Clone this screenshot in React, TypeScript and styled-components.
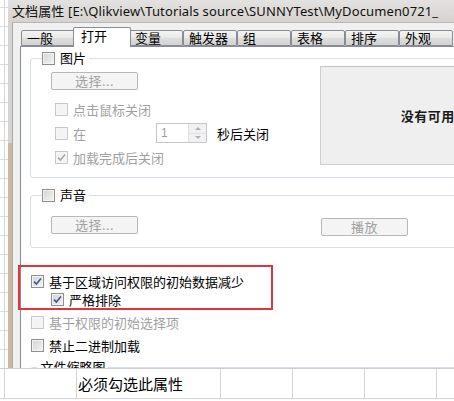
import React from "react";
import styled, { createGlobalStyle } from "styled-components";

const GlobalStyle = createGlobalStyle`
  html, body { margin: 0; padding: 0; background: #fff; }
  body {
    font-family: "Noto Sans", "Noto Sans CJK SC", sans-serif;
    color: #000;
  }
`;

const tabs = ["一般", "打开", "变量", "触发器", "组", "表格", "排序", "外观"];

const Page = styled.div`
  width: 454px;
  height: 401px;
  overflow: hidden;
  display: flex;
  flex-direction: column;
  background-color: #fff;
  background-image: linear-gradient(to right, #d6d6d6 1px, transparent 1px),
    linear-gradient(to bottom, #dcdcdc 1px, transparent 1px);
  background-size: 72px 19px;
  background-position: 4px 7px;
`;

const Desk = styled.div`
  height: 368px;
  flex-shrink: 0;
  display: flex;
  padding-left: 8px;
  overflow: hidden;
`;

const Window = styled.div`
  width: 480px;
  flex-shrink: 0;
  display: flex;
  flex-direction: column;
`;

const TitleBar = styled.div`
  height: 22px;
  flex-shrink: 0;
  padding-left: 4px;
  font-size: 13px;
  line-height: 23px;
  letter-spacing: 0.12px;
  white-space: nowrap;
  color: #111;
  background: linear-gradient(to bottom, #e4e2e0, #d5d2cf);
`;

const Frame = styled.div`
  flex: 1;
  display: flex;
  padding-left: 4px;
  background: linear-gradient(to bottom, #d7d5d3 0 121px, #cdb89c 121px);
`;

const Client = styled.div`
  flex: 1;
  display: flex;
  flex-direction: column;
  padding: 4px 0 0 8px;
  background: #f0f0f0;
  border-left: 1px solid #a8a8a8;
  border-top: 1px solid #b8b8b8;
`;

const TabStrip = styled.div`
  height: 19px;
  display: flex;
  align-items: flex-end;
  position: relative;
  z-index: 1;
`;

const Tab = styled.div<{ $active?: boolean }>`
  box-sizing: border-box;
  width: ${(p) => (p.$active ? 58 : 54)}px;
  height: ${(p) => (p.$active ? 20 : 16)}px;
  margin: 0 ${(p) => (p.$active ? -2 : 0)}px ${(p) => (p.$active ? -1 : 0)}px;
  padding-left: ${(p) => (p.$active ? 7 : 5)}px;
  border: 1px solid #898c95;
  border-bottom: ${(p) => (p.$active ? "none" : "1px solid #898c95")};
  border-radius: 2px 2px 0 0;
  font-size: 13px;
  line-height: ${(p) => (p.$active ? 17 : 14)}px;
  white-space: nowrap;
  position: relative;
  z-index: ${(p) => (p.$active ? 2 : 0)};
  background: ${(p) =>
    p.$active
      ? "#fff"
      : "linear-gradient(to bottom, #f3f3f3, #ebebeb 45%, #dedede 50%, #d3d3d3)"};
`;

const Panel = styled.div`
  flex: 1;
  margin-left: -1px;
  padding: 4px 0 0 9px;
  background: #fff;
  border: 1px solid #898c95;
  display: flex;
  flex-direction: column;
  align-items: flex-start;
`;

const Group = styled.fieldset<{ $top?: number }>`
  align-self: stretch;
  margin: ${(p) => p.$top ?? 0}px 0 0;
  padding: 0;
  border: 1px solid #d5dfe5;
  border-radius: 3px;
  min-width: 0;
`;

const Legend = styled.legend<{ $offset?: number }>`
  margin-left: ${(p) => p.$offset ?? 11}px;
  padding: 0 3px 0 0;
  height: 15px;
  display: flex;
  align-items: center;
  gap: 5px;
  font-size: 13px;
  line-height: 15px;
  color: #000;
`;

const GroupBody = styled.div<{ $bottom: number }>`
  display: flex;
  align-items: flex-start;
  padding: 0 0 ${(p) => p.$bottom}px 20px;
`;

const LeftCol = styled.div`
  width: 269px;
  display: flex;
  flex-direction: column;
  align-items: flex-start;
  padding-top: 6px;
`;

const Button = styled.div<{ $shift?: number; $left?: number }>`
  box-sizing: border-box;
  width: 87px;
  height: 18px;
  margin: ${(p) => p.$shift ?? 0}px 0 0 ${(p) => p.$left ?? 0}px;
  border: 1px solid #b5b9bd;
  border-radius: 2px;
  background: #f4f4f4;
  color: #a2a2a2;
  font-size: 13px;
  line-height: 16px;
  text-align: center;
  letter-spacing: 0.5px;
`;

const OptionList = styled.div`
  margin: 7px 0 0 4px;
  display: flex;
  flex-direction: column;
`;

const Option = styled.div<{ $muted?: boolean; $h?: number; $indent?: number; $top?: number }>`
  display: flex;
  align-items: center;
  gap: 5px;
  height: ${(p) => p.$h ?? 18}px;
  margin: ${(p) => p.$top ?? 0}px 0 0 ${(p) => p.$indent ?? 0}px;
  font-size: 13px;
  white-space: nowrap;
  color: ${(p) => (p.$muted ? "#a0a0a0" : "#000")};
`;

const Box = styled.span<{ $muted?: boolean }>`
  box-sizing: border-box;
  width: 13px;
  height: 13px;
  flex-shrink: 0;
  display: inline-flex;
  align-items: center;
  justify-content: center;
  border: 1px solid ${(p) => (p.$muted ? "#c8c8c8" : "#8e8f8f")};
  box-shadow: inset 0 0 0 1px ${(p) => (p.$muted ? "#f6f6f6" : "#f4f4f4")};
  background: ${(p) =>
    p.$muted ? "#f4f4f4" : "linear-gradient(135deg, #d2d2d2, #f5f5f5)"};
`;

const InlineLabel = styled.span<{ $w?: number }>`
  width: ${(p) => (p.$w ? `${p.$w}px` : "auto")};
`;

const Spin = styled.div`
  box-sizing: border-box;
  width: 51px;
  height: 20px;
  display: flex;
  border: 1px solid #c4c7cc;
  background: #fff;
`;

const SpinValue = styled.span`
  flex: 1;
  padding-left: 4px;
  font-family: "Liberation Sans", sans-serif;
  font-size: 12px;
  line-height: 18px;
  color: #a0a0a0;
`;

const SpinArrows = styled.div`
  width: 17px;
  display: flex;
  flex-direction: column;
  border-left: 1px solid #e0e0e0;
`;

const SpinHalf = styled.div<{ $down?: boolean }>`
  flex: 1;
  display: flex;
  align-items: center;
  justify-content: center;
  background: #f1f1f1;
  border-bottom: ${(p) => (p.$down ? "none" : "1px solid #e2e2e2")};
  &::after {
    content: "";
    border-left: 3px solid transparent;
    border-right: 3px solid transparent;
    ${(p) => (p.$down ? "border-top" : "border-bottom")}: 3px solid #b0b0b0;
  }
`;

const AfterText = styled.span`
  margin-left: 5px;
  color: #000;
`;

const Preview = styled.div`
  box-sizing: border-box;
  width: 256px;
  height: 99px;
  display: flex;
  align-items: center;
  justify-content: center;
  background: #efefef;
  border: 1px solid #cfcfcf;
  border-top-color: #c4c4c4;
  font-size: 13px;
  font-weight: 700;
  color: #1a1a1a;
  letter-spacing: 0.5px;
`;

const SoundRow = styled.div`
  display: flex;
  align-items: flex-start;
  padding-top: 13px;
`;

const Highlight = styled.div`
  box-sizing: border-box;
  width: 255px;
  margin: 17px 0 0 -12px;
  padding: 5px 0 0 11px;
  border: 2px solid #e2313f;
  display: flex;
  flex-direction: column;
`;

const Sheet = styled.div`
  height: 33px;
  flex-shrink: 0;
  display: grid;
  grid-template-columns: 5px 72px 144px repeat(3, 72px) 20px;
  grid-template-rows: 30px;
  border-top: 1px solid #d0d0d0;
  background: #fff;
`;

const Cell = styled.div`
  border-right: 1px solid #d4d4d4;
  border-bottom: 1px solid #d4d4d4;
  font-family: "Noto Sans CJK SC", sans-serif;
  font-size: 15px;
  line-height: 30px;
  padding-left: 1px;
  white-space: nowrap;
  overflow: hidden;
`;

function Check({ checked, muted }: { checked?: boolean; muted?: boolean }) {
  return (
    <Box $muted={muted}>
      {checked && (
        <svg width="9" height="9" viewBox="0 0 9 9">
          <path
            d="M1 4.6 L3.4 7 L8 1.6"
            fill="none"
            stroke={muted ? "#a8a8a8" : "#41568a"}
            strokeWidth="1.6"
          />
        </svg>
      )}
    </Box>
  );
}

export default function App() {
  return (
    <Page>
      <GlobalStyle />
      <Desk>
        <Window>
          <TitleBar>文档属性 [E:\Qlikview\Tutorials source\SUNNYTest\MyDocumen0721_</TitleBar>
          <Frame>
            <Client>
              <TabStrip>
                {tabs.map((t, i) => (
                  <Tab key={t} $active={i === 1}>
                    {t}
                  </Tab>
                ))}
              </TabStrip>
              <Panel>
                <Group>
                  <Legend>
                    <Check />
                    图片
                  </Legend>
                  <GroupBody $bottom={8}>
                    <LeftCol>
                      <Button>选择...</Button>
                      <OptionList>
                        <Option $muted $h={24}>
                          <Check muted />
                          点击鼠标关闭
                        </Option>
                        <Option $muted $h={24}>
                          <Check muted />
                          <InlineLabel $w={78}>在</InlineLabel>
                          <Spin>
                            <SpinValue>1</SpinValue>
                            <SpinArrows>
                              <SpinHalf />
                              <SpinHalf $down />
                            </SpinArrows>
                          </Spin>
                          <AfterText>秒后关闭</AfterText>
                        </Option>
                        <Option $muted $h={24}>
                          <Check muted checked />
                          加载完成后关闭
                        </Option>
                      </OptionList>
                    </LeftCol>
                    <Preview>没有可用的图片</Preview>
                  </GroupBody>
                </Group>

                <Group $top={10}>
                  <Legend>
                    <Check />
                    声音
                  </Legend>
                  <GroupBody $bottom={11}>
                    <SoundRow>
                      <Button>选择...</Button>
                      <Button $shift={2} $left={183}>
                        播放
                      </Button>
                    </SoundRow>
                  </GroupBody>
                </Group>

                <Highlight>
                  <Option>
                    <Check checked />
                    基于区域访问权限的初始数据减少
                  </Option>
                  <Option $indent={20}>
                    <Check checked />
                    严格排除
                  </Option>
                </Highlight>

                <Option $muted $indent={1} $top={3}>
                  <Check muted />
                  基于权限的初始选择项
                </Option>
                <Option $indent={1} $top={5}>
                  <Check />
                  禁止二进制加载
                </Option>

                <Group $top={6}>
                  <Legend $offset={6}>&nbsp;文件缩略图</Legend>
                </Group>
              </Panel>
            </Client>
          </Frame>
        </Window>
      </Desk>
      <Sheet>
        <Cell />
        <Cell />
        <Cell>必须勾选此属性</Cell>
        <Cell />
        <Cell />
        <Cell />
        <Cell />
      </Sheet>
    </Page>
  );
}
